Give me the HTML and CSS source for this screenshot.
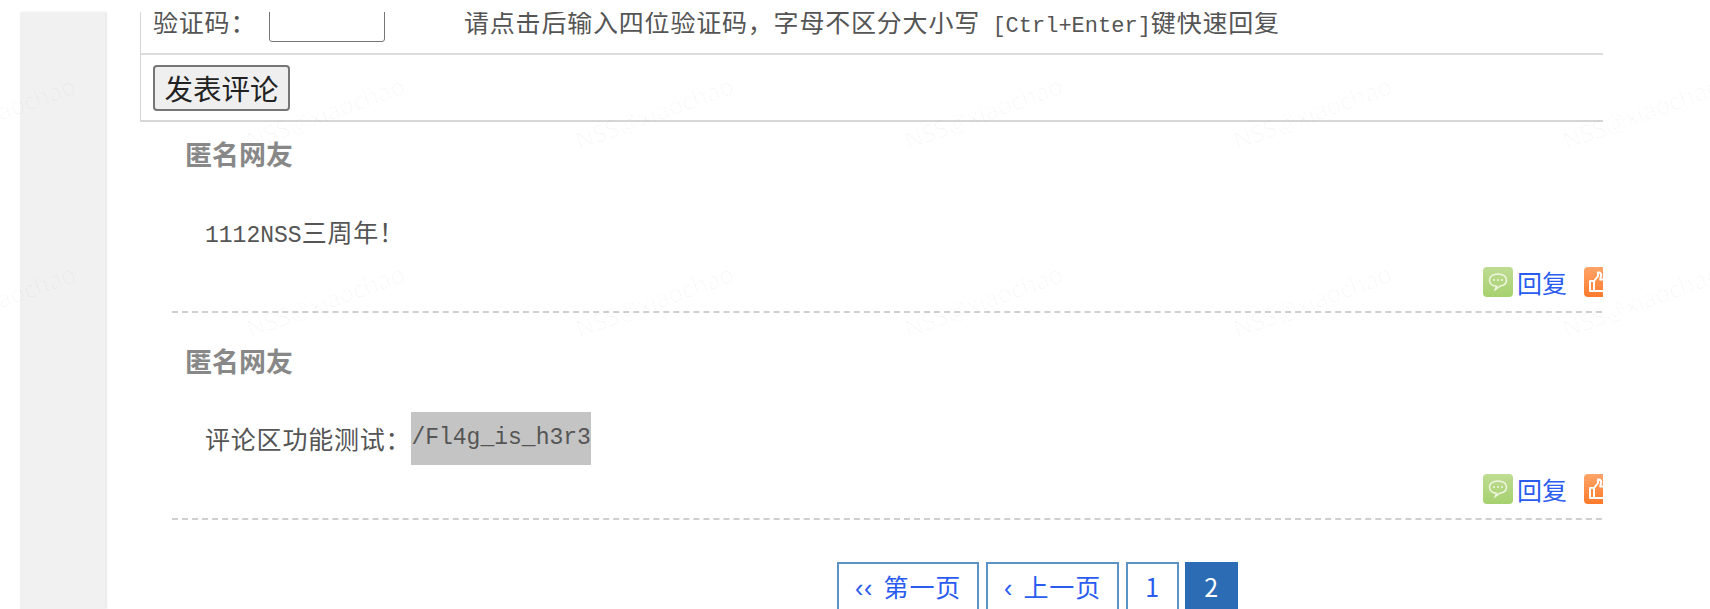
FILE: index.html
```html
<!DOCTYPE html>
<html lang="zh-CN">

<head>
    <meta charset="UTF-8">
    <title>评论</title>
    <link rel="stylesheet" href="styles.css">
</head>

<body>
    <div class="frame">
        <div class="side"></div>
        <div class="main">
            <form class="comment-form">
                <div class="captcha-row">
                    <label class="captcha-label" for="captcha">验证码：</label>
                    <input class="captcha-input" id="captcha" type="text">
                    <span class="captcha-hint">请点击后输入四位验证码，字母不区分大小写 <span class="mono hint-keys">[Ctrl+Enter]</span>键快速回复</span>
                </div>
                <div class="submit-row">
                    <button class="submit-button" type="button">发表评论</button>
                </div>
            </form>

            <div class="comment comment-first">
                <div class="comment-name">匿名网友</div>
                <div class="comment-text"><span class="mono">1112NSS</span>三周年！</div>
                <div class="comment-actions">
                    <svg class="icon" viewBox="0 0 30 30">
                        <use href="#icon-reply"></use>
                    </svg>
                    <a class="reply-link" href="#">回复</a>
                    <svg class="icon icon-like" viewBox="0 0 30 30">
                        <use href="#icon-like"></use>
                    </svg>
                </div>
            </div>

            <div class="comment">
                <div class="comment-name">匿名网友</div>
                <div class="comment-text">评论区功能测试：<span class="mono selected">/Fl4g_is_h3r3</span></div>
                <div class="comment-actions">
                    <svg class="icon" viewBox="0 0 30 30">
                        <use href="#icon-reply"></use>
                    </svg>
                    <a class="reply-link" href="#">回复</a>
                    <svg class="icon icon-like" viewBox="0 0 30 30">
                        <use href="#icon-like"></use>
                    </svg>
                </div>
            </div>

            <div class="pager">
                <a class="page" href="#"><span class="page-arrow">‹‹</span> 第一页</a>
                <a class="page page-prev" href="#"><span class="page-arrow">‹</span> 上一页</a>
                <a class="page page-num" href="#">1</a>
                <span class="page page-num page-current">2</span>
            </div>
        </div>
    </div>

    <div class="watermarks">
        <span>NSS@xiaochao</span><span>NSS@xiaochao</span><span>NSS@xiaochao</span><span>NSS@xiaochao</span><span>NSS@xiaochao</span><span>NSS@xiaochao</span>
        <span>NSS@xiaochao</span><span>NSS@xiaochao</span><span>NSS@xiaochao</span><span>NSS@xiaochao</span><span>NSS@xiaochao</span><span>NSS@xiaochao</span>
    </div>

    <svg class="sprites" width="0" height="0">
        <defs>
            <linearGradient id="green-fill" x1="0" y1="0" x2="0" y2="1">
                <stop offset="0" stop-color="#bfdc92"/>
                <stop offset="1" stop-color="#a6d16f"/>
            </linearGradient>
            <linearGradient id="orange-fill" x1="0" y1="0" x2="0" y2="1">
                <stop offset="0" stop-color="#ffa468"/>
                <stop offset="1" stop-color="#ff7a2c"/>
            </linearGradient>
            <symbol id="icon-reply" viewBox="0 0 30 30">
                <rect width="30" height="30" rx="4" fill="url(#green-fill)"/>
                <path d="M15 7c-5 0-8.500 2.500-8.500 6s3 6 7 6.200l-1.200 3.300 5-3.500c3.800-.5 6.200-2.900 6.200-6 0-3.500-3.500-6-8.500-6z" fill="none" stroke="#f0f6e2" stroke-width="1.500"/>
                <circle cx="11" cy="13" r="1" fill="#f0f6e2"/>
                <circle cx="15" cy="13" r="1" fill="#f0f6e2"/>
                <circle cx="19" cy="13" r="1" fill="#f0f6e2"/>
            </symbol>
            <symbol id="icon-like" viewBox="0 0 30 30">
                <rect width="30" height="30" rx="4" fill="url(#orange-fill)"/>
                <path d="M6 14h4v10H6zM10 14l4-5V5.500c2.500-.5 3.500 1.500 3 3.500l-.8 3.500H24c1.200 0 1.800 1 1.500 2l-2 8.500c-.2.700-.8 1-1.500 1H10" fill="none" stroke="#fff" stroke-width="2" stroke-linejoin="round"/>
            </symbol>
        </defs>
    </svg>
</body>

</html>
```

FILE: styles.css
```css
html,
body {
    height: 609px;
    margin: 0;
    overflow: hidden;
}

body {
    position: relative;
    background: #fff;
    font-family: "Noto Sans CJK SC", sans-serif;
    color: #555;
}

.frame {
    display: flex;
    height: 597px;
    margin: 12px 0 0 20px;
}

.side {
    width: 85px;
    background: #f1f1f1;
    box-shadow: 2px 0 2px #e9e9e9;
}

.main {
    width: 1496px;
    margin-left: 2px;
    overflow: hidden;
}

.mono {
    font-family: "Liberation Mono", monospace;
    font-size: 23px;
    letter-spacing: 0;
}

.comment-form {
    width: 1500px;
    margin: -12px 0 0 33px;
    border: 1px solid #d6d6d6;
    border-top: none;
    border-bottom-width: 2px;
}

.captcha-row {
    display: flex;
    align-items: flex-start;
    height: 53px;
    border-bottom: 2px solid #dcdcdc;
    font-size: 25px;
    letter-spacing: .8px;
    line-height: 42px;
}

.captcha-label {
    width: 116px;
    padding-left: 12px;
    white-space: nowrap;
}

.captcha-input {
    box-sizing: border-box;
    width: 116px;
    height: 42px;
    margin: 0;
    border: 1px solid #767676;
    border-radius: 3px;
}

.captcha-hint {
    margin-left: 79px;
    white-space: nowrap;
}

.hint-keys {
    margin-left: 6px;
    font-size: 22px;
}

.submit-row {
    padding: 10px 12px 9px;
}

.submit-button {
    display: block;
    box-sizing: border-box;
    width: 137px;
    height: 46px;
    padding: 0;
    background: #efefef;
    border: 2px solid #767676;
    border-radius: 4px;
    font-family: inherit;
    font-size: 28.500px;
    line-height: 40px;
    color: #222;
}

.comment {
    width: 1470px;
    margin-left: 65px;
    padding-top: 30px;
    border-bottom: 2px dashed #cfcfcf;
}

.comment-first {
    padding-top: 14px;
}

.comment-name {
    padding-left: 13px;
    margin-bottom: 33px;
    font-size: 27px;
    font-weight: bold;
    line-height: 36px;
    color: #888;
}

.comment-text {
    height: 53px;
    padding-left: 33px;
    font-size: 25px;
    letter-spacing: .8px;
    line-height: 53px;
    white-space: nowrap;
}

.selected {
    display: inline-block;
    vertical-align: top;
    background: #c4c4c4;
}

.comment-actions {
    display: flex;
    justify-content: flex-end;
    align-items: center;
    height: 30px;
    padding: 9px 28px 14px 0;
}

.icon {
    width: 30px;
    height: 30px;
}

.icon-like {
    margin-left: 17px;
}

.reply-link {
    margin-left: 4px;
    font-size: 25px;
    color: #2a5cf0;
    text-decoration: none;
}

.pager {
    display: flex;
    gap: 7px;
    margin: 42px 0 0 730px;
}

.page {
    display: block;
    flex: none;
    box-sizing: border-box;
    width: 142px;
    height: 60px;
    padding-top: 2px;
    border: 2px solid #5b93c7;
    font-size: 25px;
    letter-spacing: .8px;
    line-height: 40px;
    text-align: center;
    color: #2a5cf0;
    text-decoration: none;
}

.page-prev {
    width: 133px;
}

.page-num {
    width: 53px;
}

.page-current {
    margin-left: -1px;
    background: #2b6cb4;
    border-color: #2b6cb4;
    color: #fff;
}

.page-arrow {
    margin-right: 4px;
    font-family: "Liberation Sans", sans-serif;
}

.sprites {
    position: absolute;
}

/* faint repeating name stamped over the whole page */
.watermarks {
    position: absolute;
    top: 112px;
    left: -4px;
    display: grid;
    grid-template-columns: repeat(6, 329px);
    grid-auto-rows: 188px;
    font-family: "Open Sans", sans-serif;
    font-size: 24px;
    color: rgba(0, 0, 0, .028);
    pointer-events: none;
}

.watermarks span {
    width: 0;
    height: 0;
    display: flex;
    justify-content: center;
    align-items: center;
    white-space: nowrap;
    transform: rotate(-20deg);
}
```
